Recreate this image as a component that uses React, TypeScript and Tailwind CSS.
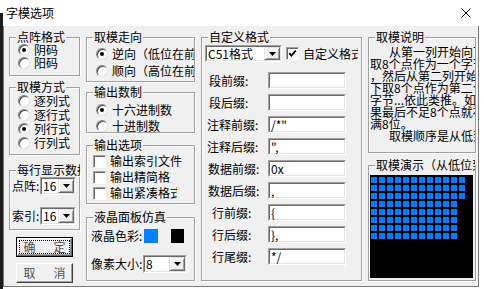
import React from 'react';

type Kids = { children?: React.ReactNode };

function Group({ label, className, inner, labelClass, children }: { label: string; className: string; inner: string; labelClass?: string } & Kids) {
    return (
        <div className={`relative shrink-0 border border-[#a0a0a0] shadow-[inset_1px_1px_0_#fff,1px_1px_0_#fff] ${className}`}>
            <span className={`absolute -top-[8px] left-[6px] h-[14px] overflow-hidden whitespace-nowrap bg-[#f0f0f0] px-[1px] leading-[14px] ${labelClass ?? ''}`}>
                {label}
            </span>
            <div className={`flex h-full flex-col overflow-hidden ${inner}`}>{children}</div>
        </div>
    );
}

function Radio({ on, label, h }: { on?: boolean; label: string; h: string }) {
    return (
        <div className={`flex shrink-0 items-center whitespace-nowrap ${h}`}>
            <span className="flex h-[12px] w-[12px] shrink-0 items-center justify-center rounded-full border border-t-[#808080] border-l-[#808080] border-b-[#e3e3e3] border-r-[#e3e3e3] bg-white shadow-[inset_1px_1px_0_#505050]">
                {on && <span className="h-[4px] w-[4px] rounded-full bg-black" />}
            </span>
            <span className="ml-[4px]">{label}</span>
        </div>
    );
}

function Check({ on }: { on?: boolean }) {
    return (
        <span className="flex h-[13px] w-[13px] shrink-0 items-center justify-center border border-t-[#a0a0a0] border-l-[#a0a0a0] border-b-white border-r-white bg-white shadow-[inset_1px_1px_0_#696969]">
            {on && (
                <svg width="9" height="9" viewBox="0 0 9 9">
                    <path d="M1.2 4.2 L3.4 6.6 L7.8 1.6" fill="none" stroke="#000" strokeWidth="1.8" />
                </svg>
            )}
        </span>
    );
}

function Sunken({ className, children }: { className: string } & Kids) {
    return (
        <div className={`flex shrink-0 border border-t-[#a0a0a0] border-l-[#a0a0a0] border-b-white border-r-white ${className}`}>
            <div className="flex min-w-0 flex-1 items-center border border-t-[#696969] border-l-[#696969] border-b-[#e3e3e3] border-r-[#e3e3e3] bg-white">
                {children}
            </div>
        </div>
    );
}

function Combo({ value, className }: { value: string; className: string }) {
    return (
        <Sunken className={className}>
            <span className="flex-1 overflow-hidden whitespace-nowrap pl-[1px]">{value}</span>
            <span className="flex h-full w-[16px] shrink-0 items-center justify-center border border-t-[#e3e3e3] border-l-[#e3e3e3] border-b-[#696969] border-r-[#696969] bg-[#f0f0f0] shadow-[inset_1px_1px_0_#fff,inset_-1px_-1px_0_#a0a0a0]">
                <svg width="7" height="4" viewBox="0 0 7 4">
                    <path d="M0 0H7L3.5 4Z" fill="#000" />
                </svg>
            </span>
        </Sunken>
    );
}

function Btn({ a, b, primary }: { a: string; b: string; primary?: boolean }) {
    if (primary) {
        return (
            <div className="ml-[7px] mt-[7px] h-[20px] w-[57px] shrink-0 border border-black bg-[#f0f0f0]">
                <div className="h-full border border-t-white border-l-white border-b-[#696969] border-r-[#696969] p-[1px] shadow-[inset_-1px_-1px_0_#a0a0a0]">
                    <div className="flex h-full items-center justify-center gap-[18px] border border-dotted border-black text-[#505050]">
                        <span>{a}</span>
                        <span>{b}</span>
                    </div>
                </div>
            </div>
        );
    }
    return (
        <div className="ml-[7px] mt-[6px] h-[20px] w-[57px] shrink-0 border border-t-white border-l-white border-b-[#404040] border-r-[#404040] bg-[#f0f0f0] shadow-[inset_-1px_-1px_0_#a0a0a0]">
            <div className="flex h-full items-center justify-center gap-[18px] text-[#505050]">
                <span>{a}</span>
                <span>{b}</span>
            </div>
        </div>
    );
}

const fields: { label: string; value: string; pl: string }[] = [
    { label: '段前缀:', value: '', pl: 'pl-[7px]' },
    { label: '段后缀:', value: '', pl: 'pl-[7px]' },
    { label: '注释前缀:', value: '/*"', pl: 'pl-[5px]' },
    { label: '注释后缀:', value: '",', pl: 'pl-[5px]' },
    { label: '数据前缀:', value: '0x', pl: 'pl-[6px]' },
    { label: '数据后缀:', value: ',', pl: 'pl-[6px]' },
    { label: '行前缀:', value: '{', pl: 'pl-[10px]' },
    { label: '行后缀:', value: '},', pl: 'pl-[10px]' },
    { label: '行尾缀:', value: '*/', pl: 'pl-[10px]' },
];

const desc: { text: string; indent?: boolean }[] = [
    { text: '从第一列开始向下', indent: true },
    { text: '取8个点作为一个字节' },
    { text: '，然后从第二列开始向' },
    { text: '下取8个点作为第二个' },
    { text: '字节...依此类推。如' },
    { text: '果最后不足8个点就补' },
    { text: '满8位。' },
    { text: '取模顺序是从低到', indent: true },
];

const gridRows = [12, 12, 12, 11, 11, 11, 11, 11];

export default function App() {
    return (
        <div className="flex h-[289px] w-[484px] overflow-hidden bg-white font-['Noto_Sans_CJK_SC',sans-serif] text-[12px] leading-[12px] text-black">
            <div className="mt-[13px] w-[3px] shrink-0 bg-[#1e1e1e]" />
            <div className="flex w-[476px] shrink-0 flex-col">
                <div className="flex h-[26px] shrink-0 items-center justify-between bg-white pl-[3px] pr-[8px]">
                    <span>字模选项</span>
                    <svg width="10" height="10" viewBox="0 0 10 10">
                        <path d="M0.5 0.5L9.5 9.5M9.5 0.5L0.5 9.5" stroke="#000" strokeWidth="1" />
                    </svg>
                </div>

                <div className="flex h-[261px] shrink-0 gap-[6px] border-x border-b border-[#7a7a7a] bg-[#f0f0f0] pl-[5px] pt-[11px]">
                    {/* column 1 */}
                    <div className="flex w-[71px] shrink-0 flex-col">
                        <Group label="点阵格式" className="h-[39px]" inner="pl-[8px] pt-[5px]">
                            <Radio on label="阴码" h="h-[13px]" />
                            <Radio label="阳码" h="h-[13px]" />
                        </Group>
                        <Group label="取模方式" className="mt-[11px] h-[68px]" inner="pl-[8px] pt-[6px]">
                            <Radio label="逐列式" h="h-[14px]" />
                            <Radio label="逐行式" h="h-[14px]" />
                            <Radio on label="列行式" h="h-[14px]" />
                            <Radio label="行列式" h="h-[14px]" />
                        </Group>
                        <Group label="每行显示数据" className="mt-[15px] h-[60px]" inner="pl-[2px] pt-[6px]" labelClass="max-w-[64px]">
                            <div className="flex h-[18px] items-center">
                                <span className="w-[28px]">点阵:</span>
                                <Combo value="16" className="h-[18px] w-[36px]" />
                            </div>
                            <div className="mt-[12px] flex h-[18px] items-center">
                                <span className="w-[28px]">索引:</span>
                                <Combo value="16" className="h-[18px] w-[36px]" />
                            </div>
                        </Group>
                        <Btn primary a="确" b="定" />
                        <Btn a="取" b="消" />
                    </div>

                    {/* column 2 */}
                    <div className="flex w-[109px] shrink-0 flex-col">
                        <Group label="取模走向" className="h-[45px]" inner="pl-[9px] pt-[7px]">
                            <Radio on label="逆向（低位在前）" h="h-[17px]" />
                            <Radio label="顺向（高位在前）" h="h-[17px]" />
                        </Group>
                        <Group label="输出数制" className="mt-[10px] h-[41px]" inner="pl-[9px] pt-[8px]">
                            <Radio on label="十六进制数" h="h-[17px]" />
                            <Radio label="十进制数" h="h-[16px]" />
                        </Group>
                        <Group label="输出选项" className="mt-[12px] h-[59px]" inner="pl-[6px] pt-[7px]">
                            <div className="flex h-[16px] w-[95px] items-center overflow-hidden whitespace-nowrap">
                                <Check />
                                <span className="ml-[4px]">输出索引文件</span>
                            </div>
                            <div className="flex h-[16px] w-[78px] items-center overflow-hidden whitespace-nowrap">
                                <Check />
                                <span className="ml-[4px]">输出精简格式</span>
                            </div>
                            <div className="flex h-[16px] w-[84px] items-center overflow-hidden whitespace-nowrap">
                                <Check />
                                <span className="ml-[4px]">输出紧凑格式</span>
                            </div>
                        </Group>
                        <Group label="液晶面板仿真" className="mt-[13px] h-[64px]" inner="pl-[4px] pt-[11px]">
                            <div className="flex h-[14px] items-center">
                                <span className="w-[53px] whitespace-nowrap">液晶色彩:</span>
                                <span className="h-[14px] w-[14px] bg-[#0080ff]" />
                                <span className="ml-[13px] h-[14px] w-[13px] bg-black" />
                            </div>
                            <div className="mt-[12px] flex h-[18px] items-center">
                                <span className="w-[52px] whitespace-nowrap">像素大小:</span>
                                <Combo value="8" className="h-[18px] w-[44px]" />
                            </div>
                        </Group>
                    </div>

                    {/* column 3 */}
                    <div className="flex w-[161px] shrink-0 flex-col">
                        <Group label="自定义格式" className="h-[244px]" inner="pt-[7px]">
                            <div className="flex h-[17px] items-center pl-[3px]">
                                <Combo value="C51格式" className="h-[17px] w-[77px]" />
                                <div className="ml-[4px] flex w-[72px] items-center overflow-hidden whitespace-nowrap">
                                    <Check on />
                                    <span className="ml-[4px]">自定义格式</span>
                                </div>
                            </div>
                            <div className="mt-[10px] flex flex-col gap-[5px]">
                                {fields.map((f) => (
                                    <div key={f.label} className="flex h-[17px] items-center">
                                        <span className={`w-[66px] whitespace-nowrap ${f.pl}`}>{f.label}</span>
                                        <Sunken className="h-[17px] w-[78px]">
                                            <span className="whitespace-pre pl-[1px]">{f.value}</span>
                                        </Sunken>
                                    </div>
                                ))}
                            </div>
                        </Group>
                    </div>

                    {/* column 4 */}
                    <div className="flex w-[108px] shrink-0 flex-col">
                        <Group label="取模说明" className="h-[116px]" inner="pl-[1px] pt-[8px]">
                            {desc.map((d, i) => (
                                <div key={i} className={`h-[12px] whitespace-nowrap ${d.indent ? 'pl-[19px]' : ''}`}>
                                    {d.text}
                                </div>
                            ))}
                        </Group>
                        <Group label="取模演示（从低位到高位）" className="mt-[12px] h-[116px]" inner="pl-[1px] pt-[9px]" labelClass="max-w-[100px]">
                            <div className="flex h-[103px] w-[103px] shrink-0 flex-col gap-[2px] bg-black pl-[1px] pt-[2px]">
                                {gridRows.map((n, r) => (
                                    <div key={r} className="flex gap-[2px]">
                                        {Array.from({ length: n }).map((_, c) => (
                                            <span key={c} className="h-[6px] w-[6px] bg-[#0080ff]" />
                                        ))}
                                    </div>
                                ))}
                            </div>
                        </Group>
                    </div>
                </div>
            </div>
        </div>
    );
}
